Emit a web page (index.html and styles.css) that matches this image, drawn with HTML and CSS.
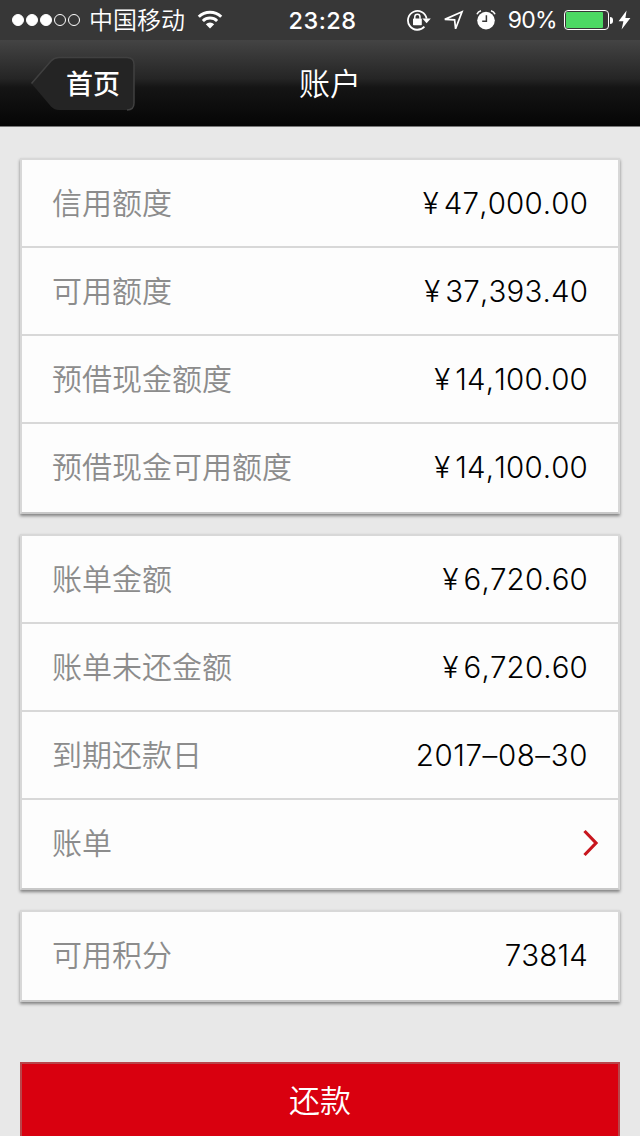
FILE: index.html
```html
<!DOCTYPE html>
<html lang="zh-CN">
<head>
    <meta charset="UTF-8">
    <meta name="viewport" content="width=device-width, initial-scale=1.0">
    <title>账户</title>
    <link rel="stylesheet" href="styles.css">
</head>
<body>
    <!-- 状态栏 -->
    <div class="status-bar">
        <div class="status-left">
            <span class="dot full"></span>
            <span class="dot full"></span>
            <span class="dot full"></span>
            <span class="dot"></span>
            <span class="dot"></span>
            <span class="carrier">中国移动</span>
            <svg class="wifi" width="26" height="20" viewBox="0 0 26 20">
                <path d="M1.8 6.8a16 16 0 0 1 22.4 0M5.9 11a10.2 10.2 0 0 1 14.2 0" fill="none" stroke="#fff" stroke-width="3"/>
                <path d="M8.8 14.2a6.2 6.2 0 0 1 8.4 0L13 18.6z" fill="#fff"/>
            </svg>
        </div>
        <div class="time">23:28</div>
        <div class="status-right">
            <svg class="lock" width="24" height="22" viewBox="0 0 24 22">
                <path d="M17.4 17.6A9.4 9.4 0 1 1 19.6 9.6" fill="none" stroke="#fff" stroke-width="1.8"/>
                <path d="M15.4 9.4h8.4l-4.2 4.8z" fill="#fff"/>
                <rect x="6" y="9.4" width="8.8" height="6.8" rx=".6" fill="#fff"/>
                <path d="M7.8 10V7.8a2.6 2.6 0 0 1 5.2 0v2" fill="none" stroke="#fff" stroke-width="1.5"/>
            </svg>
            <svg class="arrow" width="21" height="21" viewBox="0 0 21 21">
                <path d="M1.8 9.4L19 1.8 12.6 18.8 11.6 9.8z" fill="none" stroke="#fff" stroke-width="1.7"/>
            </svg>
            <svg class="alarm" width="20" height="22" viewBox="0 0 20 22">
                <circle cx="10" cy="11.6" r="8.8" fill="#fff"/>
                <path d="M1 5.2Q2 2.6 5 1.8M15 1.8Q18 2.6 19 5.2" fill="none" stroke="#fff" stroke-width="1.6"/>
                <path d="M10.4 6.2v6H6.2" fill="none" stroke="#373737" stroke-width="1.5"/>
            </svg>
            <span class="percent">90%</span>
            <div class="battery"><div class="level" style="width: 90%"></div></div>
            <div class="battery-cap"></div>
            <svg class="bolt" width="13" height="20" viewBox="0 0 13 20">
                <path d="M8.6 .6L.6 11.2h4.8L3.6 19.4 12.4 8H7.4z" fill="#fff"/>
            </svg>
        </div>
    </div>

    <!-- 标题栏 -->
    <div class="header">
        <a class="back" href="#">
            <svg width="106" height="56" viewBox="0 0 106 56">
                <path d="M1.5 27.5L21 5Q24.5 1.5 29 1.5H97Q104 1.5 104 8.5V47Q104 54 97 54H29Q24.5 54 21 50.5Z" fill="#242424"/>
                <path d="M1.5 27.5L21 5Q24.5 1.5 29 1.5H97Q104 1.5 104 8.5V47Q104 54 97 54" fill="none" stroke="#404040" stroke-width="1.5"/>
            </svg>
            <span>首页</span>
        </a>
        <h1>账户</h1>
    </div>

    <div class="content">
        <!-- 额度 -->
        <div class="card">
            <div class="row"><span class="label">信用额度</span><span class="value"><i>¥</i>47,000.00</span></div>
            <div class="row"><span class="label">可用额度</span><span class="value"><i>¥</i>37,393.40</span></div>
            <div class="row"><span class="label">预借现金额度</span><span class="value"><i>¥</i>14,100.00</span></div>
            <div class="row"><span class="label">预借现金可用额度</span><span class="value"><i>¥</i>14,100.00</span></div>
        </div>

        <!-- 账单 -->
        <div class="card">
            <div class="row"><span class="label">账单金额</span><span class="value"><i>¥</i>6,720.60</span></div>
            <div class="row"><span class="label">账单未还金额</span><span class="value"><i>¥</i>6,720.60</span></div>
            <div class="row"><span class="label">到期还款日</span><span class="value date">2017–08–30</span></div>
            <div class="row link">
                <span class="label">账单</span>
                <svg width="16" height="28" viewBox="0 0 16 28">
                    <path d="M1.5 2L13 14 1.5 26" fill="none" stroke="#c8161e" stroke-width="3.2"/>
                </svg>
            </div>
        </div>

        <!-- 积分 -->
        <div class="card">
            <div class="row"><span class="label">可用积分</span><span class="value">73814</span></div>
        </div>

        <button class="pay">还款</button>
    </div>
</body>
</html>
```

FILE: styles.css
```css
* {
    box-sizing: border-box;
}
body {
    margin: 0;
    height: 1136px;
    overflow: hidden;
    background-color: #e8e8e8;
    font-family: Inter, "Noto Sans CJK SC", sans-serif;
    color: #000;
}

/* 状态栏 */
.status-bar {
    display: grid;
    grid-template-columns: 1fr auto 1fr;
    align-items: center;
    height: 40px;
    background-color: #373737;
    color: #fff;
    font-size: 24px;
}
.status-left,
.status-right {
    display: flex;
    align-items: center;
    height: 40px;
}
.status-left {
    padding-left: 12px;
}
.status-right {
    justify-content: flex-end;
    padding-right: 9px;
}
.dot {
    width: 12px;
    height: 12px;
    margin-right: 2px;
    border: 1.5px solid #fff;
    border-radius: 50%;
}
.dot.full {
    background-color: #fff;
}
.carrier {
    margin-left: 7px;
    padding-top: 1px;
    font-weight: 350;
    line-height: 38px;
}
.wifi {
    margin-left: 12px;
}
.time {
    padding-left: 5px;
    font-size: 23.5px;
    font-weight: 500;
    letter-spacing: 0.5px;
}
.arrow {
    margin-left: 12px;
}
.alarm {
    margin-left: 12px;
}
.percent {
    margin-left: 12px;
    font-size: 23px;
    font-weight: 400;
    letter-spacing: -0.7px;
}
.battery {
    width: 45px;
    height: 20px;
    margin-left: 7px;
    padding: 1px;
    border: 1.5px solid #fff;
    border-radius: 4px;
}
.level {
    height: 100%;
    background-color: #4cd964;
    border-radius: 1px;
}
.battery-cap {
    width: 3px;
    height: 7px;
    margin-left: 1px;
    background-color: #fff;
    border-radius: 0 3px 3px 0;
}
.bolt {
    margin-left: 5px;
}

/* 标题栏 */
.header {
    display: grid;
    grid-template-columns: 1fr auto 1fr;
    align-items: center;
    height: 87px;
    background: linear-gradient(#444 0, #252525 45%, #151515 55%, #050505 100%);
    border-bottom: 1px solid #777;
    color: #fff;
}
.back {
    display: grid;
    width: 106px;
    margin-left: 30px;
    padding-top: 2px;
    color: #fff;
    font-size: 27px;
    font-weight: 500;
    text-decoration: none;
}
.back svg,
.back span {
    grid-area: 1 / 1;
}
.back span {
    padding-left: 36px;
    line-height: 57px;
}
.header h1 {
    grid-column: 2;
    margin: 0;
    padding: 2px 0 0 20px;
    font-size: 31px;
    font-weight: 350;
    line-height: 84px;
}

/* 内容 */
.content {
    padding: 31px 20px 0;
}
.card {
    margin-bottom: 20px;
    border: 2px solid #d8d8d8;
    border-bottom-color: #c8c8c8;
    background-color: #fdfdfd;
    box-shadow: 0 2px 3px rgba(0, 0, 0, 0.45);
}
.row {
    display: flex;
    justify-content: space-between;
    align-items: center;
    height: 88px;
    padding: 0 30px;
    border-bottom: 2px solid #d8d8d8;
    font-size: 30px;
}
.row:last-child {
    padding-bottom: 2px;
    border-bottom: none;
}
.label {
    padding-bottom: 4px;
    color: #8c8c8c;
    font-weight: 350;
}
.value {
    font-size: 29.5px;
    font-weight: 350;
    font-kerning: none;
    letter-spacing: 0.15px;
}
.value i {
    margin-right: 5px;
    font-style: normal;
}
.date {
    letter-spacing: 0.6px;
}
.link {
    padding-right: 19px;
}
.pay {
    display: block;
    width: 100%;
    height: 88px;
    margin-top: 60px;
    padding: 0 0 15px;
    border: 2px solid #b8454a;
    background-color: #d9000f;
    color: #fff;
    font-family: inherit;
    font-size: 31px;
    font-weight: 350;
}
```
